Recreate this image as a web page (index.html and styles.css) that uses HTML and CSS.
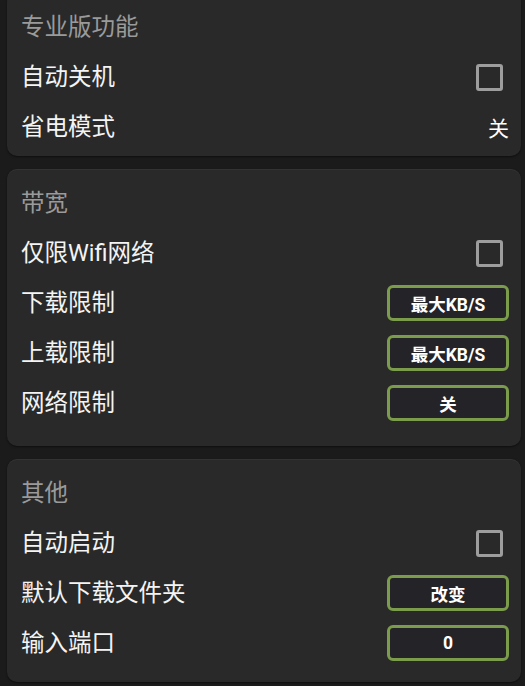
FILE: index.html
```html
<!DOCTYPE html>
<html lang="zh-CN">
<head>
<meta charset="utf-8">
<title>设置</title>
<link rel="stylesheet" href="styles.css">
</head>
<body>
<div class="page">
  <section class="card card-pro">
    <div class="card-title">专业版功能</div>
    <div class="rows">
      <div class="row"><span class="label">自动关机</span><span class="checkbox"></span></div>
      <div class="row"><span class="label">省电模式</span><span class="value">关</span></div>
    </div>
  </section>
  <section class="card card-bw">
    <div class="card-title">带宽</div>
    <div class="rows">
      <div class="row"><span class="label">仅限Wifi网络</span><span class="checkbox"></span></div>
      <div class="row"><span class="label">下载限制</span><span class="btn">最大KB/S</span></div>
      <div class="row"><span class="label">上载限制</span><span class="btn">最大KB/S</span></div>
      <div class="row"><span class="label">网络限制</span><span class="btn">关</span></div>
    </div>
  </section>
  <section class="card card-other">
    <div class="card-title">其他</div>
    <div class="rows">
      <div class="row"><span class="label">自动启动</span><span class="checkbox"></span></div>
      <div class="row"><span class="label">默认下载文件夹</span><span class="btn">改变</span></div>
      <div class="row"><span class="label">输入端口</span><span class="btn">0</span></div>
    </div>
  </section>
</div>
</body>
</html>
```
FILE: styles.css
```css
html, body {
  margin: 0;
  padding: 0;
  background: #1b1b1b;
  height: 100%;
  overflow: hidden;
}
body {
  font-family: Roboto, "Noto Sans CJK SC", sans-serif;
  color: #f2f2f2;
}
.page {
  display: flex;
  flex-direction: column;
  gap: 13px;
  padding: 0 4px 0 7px;
}
.card {
  background: #292929;
  border-radius: 10px;
  padding: 12px 12px 16px 13px;
  box-shadow: inset 0 1px 0 rgba(255,255,255,0.05), 0 1px 2px rgba(0,0,0,0.5);
}
.card-pro {
  margin-top: -7px;
  padding-bottom: 4px;
}
.card-bw { padding-bottom: 18px; }
.card-other { padding-bottom: 14px; }
.card-title {
  font-size: 23.5px;
  line-height: 44px;
  height: 44px;
  color: #9a9a9a;
  padding-left: 1px;
}
.rows {
  margin-top: 3px;
  display: flex;
  flex-direction: column;
}
.row {
  height: 50px;
  display: flex;
  align-items: center;
  justify-content: space-between;
}
.label {
  font-size: 23.5px;
  line-height: 30px;
  color: #f4f4f4;
  padding-left: 1px;
}
.checkbox {
  box-sizing: border-box;
  width: 27px;
  height: 27px;
  border: 3px solid #9d9d9d;
  border-radius: 3px;
  margin-right: 6px;
}
.value {
  font-size: 21px;
  color: #ffffff;
  margin-right: 0;
}
.btn {
  box-sizing: border-box;
  width: 122px;
  height: 36px;
  border: 3px solid #7b9c4a;
  border-radius: 6px;
  background: #242328;
  color: #ffffff;
  font-weight: 700;
  font-size: 17.5px;
  display: flex;
  align-items: center;
  justify-content: center;
}
```
